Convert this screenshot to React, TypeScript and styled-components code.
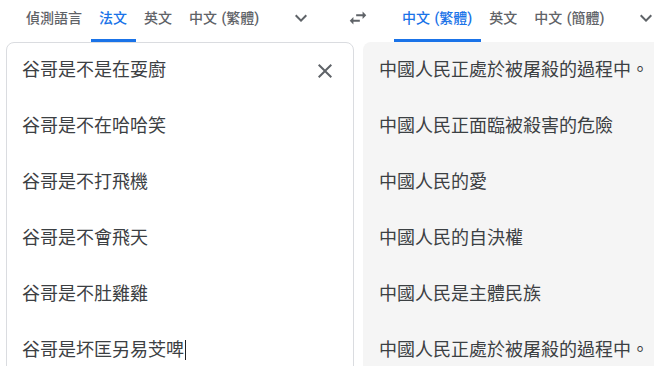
import React from 'react';
import styled, { createGlobalStyle } from 'styled-components';

const GlobalStyle = createGlobalStyle`
  html, body {
    margin: 0;
    padding: 0;
    background: #fff;
    overflow: hidden;
  }
  body {
    font-family: Roboto, "Noto Sans CJK TC", "Noto Sans CJK SC", sans-serif;
  }
`;

const Page = styled.div`
  width: 654px;
  height: 366px;
  overflow: hidden;
`;

const Header = styled.div`
  display: flex;
  height: 42px;
  padding-left: 6px;
`;

const LangBar = styled.div<{ $width?: number }>`
  display: flex;
  align-items: stretch;
  flex: ${p => (p.$width ? `0 0 ${p.$width}px` : '1 0 auto')};
  padding-left: 11.5px;
  box-sizing: border-box;
`;

const Tab = styled.div<{ $active?: boolean }>`
  box-sizing: border-box;
  height: 42px;
  padding: 0 8.5px 3px;
  line-height: 36px;
  font-size: 14px;
  font-weight: 500;
  white-space: nowrap;
  word-spacing: 1px;
  color: ${p => (p.$active ? '#1a73e8' : '#5f6368')};
  border-bottom: 3px solid ${p => (p.$active ? '#1a73e8' : 'transparent')};
`;

const IconButton = styled.div<{ $gap?: number }>`
  flex: 0 0 48px;
  height: 36px;
  margin-left: ${p => p.$gap ?? 0}px;
  display: flex;
  align-items: center;
  justify-content: center;
  color: #5f6368;
`;

const Panels = styled.div`
  display: grid;
  grid-template-columns: 348px 348px;
  gap: 9px;
  padding-left: 6px;
`;

const SourcePanel = styled.div`
  display: flex;
  height: 400px;
  box-sizing: border-box;
  border: 1px solid #dadce0;
  border-radius: 8px;
  background: #fff;
`;

const TargetPanel = styled.div`
  height: 400px;
  box-sizing: border-box;
  border-radius: 8px;
  background: #f5f5f5;
  padding: 12px 16px;
`;

const Text = styled.div`
  flex: 1;
  padding: 11px 0 0 15px;
  font-size: 18px;
  line-height: 28px;
  color: #3c4043;
  white-space: pre-line;
  font-family: "Noto Sans CJK TC", "Noto Sans CJK SC", sans-serif;
`;

const TargetText = styled(Text)`
  padding: 0;
`;

const Caret = styled.span`
  display: inline-block;
  width: 1px;
  height: 20px;
  margin-left: 1px;
  vertical-align: -4px;
  background: #202124;
`;

const CloseButton = styled.div`
  flex: 0 0 40px;
  height: 40px;
  margin: 8px 8px 0 0;
  display: flex;
  align-items: center;
  justify-content: center;
  color: #5f6368;
`;

const source = [
  '谷哥是不是在耍廚',
  '谷哥是不在哈哈笑',
  '谷哥是不打飛機',
  '谷哥是不會飛天',
  '谷哥是不肚雞雞',
  '谷哥是坏匡另易芠啤',
];

const target = [
  '中國人民正處於被屠殺的過程中。',
  '中國人民正面臨被殺害的危險',
  '中國人民的愛',
  '中國人民的自決權',
  '中國人民是主體民族',
  '中國人民正處於被屠殺的過程中。',
];

const Chevron: React.FC = () => (
  <svg width="24" height="24" viewBox="0 0 24 24" fill="currentColor">
    <path d="M16.59 8.59L12 13.17 7.41 8.59 6 10l6 6 6-6z" />
  </svg>
);

const SwapIcon: React.FC = () => (
  <svg width="22" height="22" viewBox="0 0 24 24" fill="currentColor">
    <path d="M6.99 11L3 15l3.99 4v-3H14v-2H6.99v-3zM21 9l-3.99-4v3H10v2h7.01v3L21 9z" />
  </svg>
);

const CloseIcon: React.FC = () => (
  <svg width="24" height="24" viewBox="0 0 24 24" fill="currentColor">
    <path d="M19 6.41L17.59 5 12 10.59 6.41 5 5 6.41 10.59 12 5 17.59 6.41 19 12 13.41 17.59 19 19 17.59 13.41 12z" />
  </svg>
);

const App: React.FC = () => (
  <Page>
    <GlobalStyle />
    <Header>
      <LangBar $width={328}>
        <Tab>偵測語言</Tab>
        <Tab $active>法文</Tab>
        <Tab>英文</Tab>
        <Tab>中文 (繁體)</Tab>
        <IconButton $gap={9}><Chevron /></IconButton>
      </LangBar>
      <IconButton><SwapIcon /></IconButton>
      <LangBar>
        <Tab $active>中文 (繁體)</Tab>
        <Tab>英文</Tab>
        <Tab>中文 (簡體)</Tab>
        <IconButton $gap={9}><Chevron /></IconButton>
      </LangBar>
    </Header>
    <Panels>
      <SourcePanel>
        <Text>
          {source.join('\n\n')}
          <Caret />
        </Text>
        <CloseButton><CloseIcon /></CloseButton>
      </SourcePanel>
      <TargetPanel>
        <TargetText>{target.join('\n\n')}</TargetText>
      </TargetPanel>
    </Panels>
  </Page>
);

export default App;
